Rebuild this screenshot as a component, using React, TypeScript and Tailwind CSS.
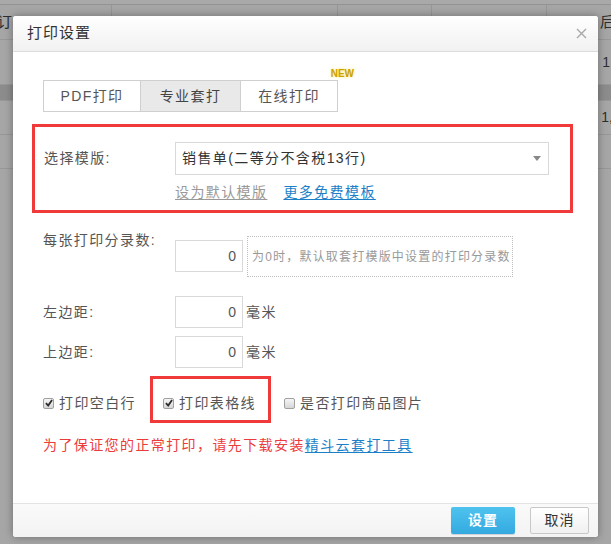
import React from 'react'

function CheckBox({ checked }: { checked: boolean }) {
  return (
    <span className="w-[11px] h-[11px] shrink-0 rounded-[2px] border border-[#a0a0a0] bg-gradient-to-b from-[#f6f6f6] to-[#d6d6d6] flex items-center justify-center">
      {checked && (
        <svg width="8" height="8" viewBox="0 0 10 10">
          <path d="M1.2 5.2 L4 8.2 L8.8 1.2" fill="none" stroke="#2b2b2b" strokeWidth="2.2" />
        </svg>
      )}
    </span>
  )
}

function NumInput({ value }: { value: string }) {
  return (
    <div className="w-[68px] h-[32px] shrink-0 border border-[#d9d9d9] bg-white flex items-center justify-end pr-[6px] text-[14px] text-[#555] tracking-normal">
      {value}
    </div>
  )
}

export default function App() {
  return (
    <div className="relative w-[611px] h-[544px] overflow-hidden bg-[#a6a6a6] font-['Liberation_Sans','Noto_Sans_CJK_SC',sans-serif] text-[14px]">
      {/* page behind the dialog */}
      <div className="h-[5px] bg-[#a9a9a9] border-b border-[#939393]" />
      <div className="h-[35px] flex border-b border-[#979797] text-[15px] text-[#2e2e2e]">
        <div className="w-[112px] border-r border-[#979797] flex items-center">
          <span className="-ml-[3px]">订</span>
        </div>
        <div className="w-[226px] border-r border-[#979797]" />
        <div className="w-[94px] border-r border-[#979797]" />
        <div className="w-[115px] border-r border-[#979797]" />
        <div className="flex-1 flex items-center justify-end">
          <span className="-mr-[4px]">后</span>
        </div>
      </div>
      <div className="h-[44px] flex items-center justify-end text-[#2e2e2e] pr-[1px]">1</div>
      <div className="h-[17px] bg-[#8c8c8c] border-y border-[#979797]" />
      <div className="h-[34px] flex items-center justify-end text-[#2e2e2e] border-b border-[#979797]">
        <span className="-mr-[2px]">1,</span>
      </div>
      <div className="h-[34px] border-b border-[#979797]" />

      {/* dialog */}
      <div className="absolute left-[13px] top-[16px] w-[585px] h-[521px] bg-white rounded-[3px] shadow-[0_0_8px_rgba(0,0,0,0.35)] flex flex-col overflow-hidden">
        {/* title bar */}
        <div className="h-[36px] shrink-0 flex items-center justify-between pl-[14px] pr-[11px] bg-gradient-to-b from-white to-[#f1f1f1] border-b border-[#dcdcdc]">
          <span className="text-[15px] text-[#333] tracking-[1px]">打印设置</span>
          <svg width="11" height="11" viewBox="0 0 11 11">
            <path d="M1 1 L10 10 M10 1 L1 10" stroke="#a8a8a8" strokeWidth="1.4" />
          </svg>
        </div>

        {/* body */}
        <div className="flex-1 flex flex-col pl-[30px] pt-[28px] text-[#555] tracking-[1.4px]">
          {/* tabs */}
          <div className="relative flex w-[295px] h-[32px] border border-[#cfcfcf] text-[#555]">
            <div className="w-[97px] flex items-center justify-center border-r border-[#cfcfcf]">PDF打印</div>
            <div className="w-[100px] flex items-center justify-center border-r border-[#cfcfcf] bg-[#e9e9e9] text-[#444]">专业套打</div>
            <div className="flex-1 flex items-center justify-center">在线打印</div>
            <span className="absolute -top-[12px] right-[-17px] text-[10px] font-bold leading-none tracking-normal text-[#caa200] [text-shadow:0_0_3px_#ffe066]">
              NEW
            </span>
          </div>

          {/* template (highlighted) */}
          <div className="mt-[12px] -ml-[11px] w-[541px] h-[89px] border-[3px] border-[#f03a3a] pl-[9px] pt-[15px]">
            <div className="flex items-center">
              <span className="w-[131px] shrink-0">选择模版:</span>
              <div className="w-[374px] h-[33px] border border-[#d9d9d9] flex items-center justify-between pl-[6px] pr-[7px] text-[#333]">
                <span>销售单(二等分不含税13行)</span>
                <svg width="8" height="5" viewBox="0 0 8 5">
                  <path d="M0 0 L8 0 L4 5 Z" fill="#888" />
                </svg>
              </div>
            </div>
            <div className="flex gap-[16px] ml-[131px] mt-[7px] leading-[20px]">
              <span className="text-[#999] underline underline-offset-2">设为默认模版</span>
              <span className="text-[#1c7fc7] underline underline-offset-2">更多免费模板</span>
            </div>
          </div>

          {/* entries per page */}
          <div className="flex items-start mt-[17px]">
            <span className="w-[132px] shrink-0 leading-[20px]">每张打印分录数:</span>
            <div className="mt-[10px]">
              <NumInput value="0" />
            </div>
            <div className="ml-[4px] mt-[6px] w-[266px] h-[41px] border border-dotted border-[#bdbdbd] flex items-center pl-[4px] text-[12px] text-[#999] tracking-[1.2px]">
              为0时，默认取套打模版中设置的打印分录数
            </div>
          </div>

          {/* margins */}
          <div className="flex items-center mt-[19px]">
            <span className="w-[132px] shrink-0">左边距:</span>
            <NumInput value="0" />
            <span className="ml-[3px]">毫米</span>
          </div>
          <div className="flex items-center mt-[8px]">
            <span className="w-[132px] shrink-0">上边距:</span>
            <NumInput value="0" />
            <span className="ml-[3px]">毫米</span>
          </div>

          {/* options */}
          <div className="flex items-start mt-[8px] leading-[20px]">
            <label className="flex items-center gap-[5px] mt-[17px]">
              <CheckBox checked />
              <span>打印空白行</span>
            </label>
            <div className="ml-[14px] h-[47px] border-[3px] border-[#f03a3a] pl-[10px] pr-[12px] pt-[14px]">
              <label className="flex items-center gap-[5px]">
                <CheckBox checked />
                <span>打印表格线</span>
              </label>
            </div>
            <label className="flex items-center gap-[5px] mt-[17px] ml-[13px]">
              <CheckBox checked={false} />
              <span>是否打印商品图片</span>
            </label>
          </div>

          <p className="mt-[12px] leading-[20px] text-[#ec3b3b]">
            为了保证您的正常打印，请先下载安装
            <span className="text-[#1c7fc7] underline underline-offset-2">精斗云套打工具</span>
          </p>
        </div>

        {/* footer */}
        <div className="h-[34px] shrink-0 border-t border-[#e3e3e3] bg-gradient-to-b from-[#fafafa] to-[#f3f3f3] flex items-center justify-end gap-[15px] pr-[9px]">
          <button className="w-[64px] h-[27px] rounded-[2px] bg-gradient-to-b from-[#4fc3ee] to-[#33a9e0] text-white text-[14px] font-bold tracking-[1px] shadow-[0_1px_1px_rgba(0,0,0,0.15)]">
            设置
          </button>
          <button className="w-[59px] h-[27px] rounded-[2px] border border-[#c8c8c8] bg-gradient-to-b from-white to-[#f0f0f0] text-[#333] text-[14px] tracking-[1px]">
            取消
          </button>
        </div>
      </div>
    </div>
  )
}
